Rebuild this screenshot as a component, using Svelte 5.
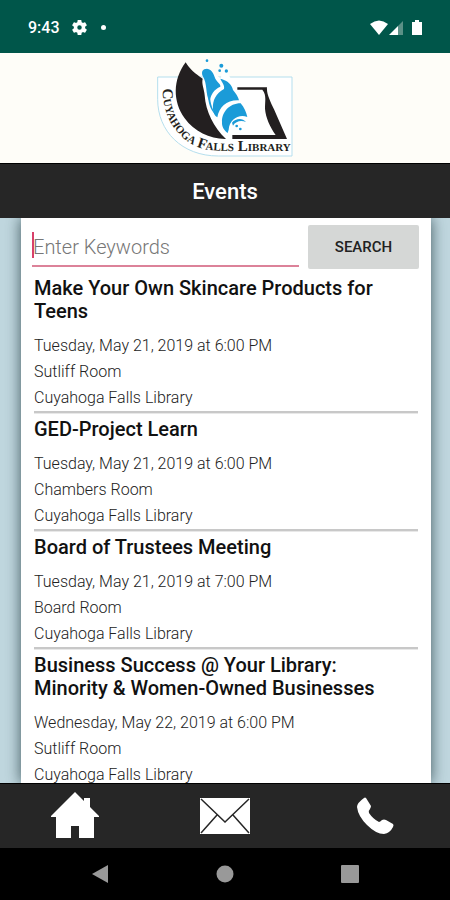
<script lang="ts">
  interface LibraryEvent {
    title: string;
    date: string;
    room: string;
  }

  const branch = 'Cuyahoga Falls Library';
  const events: LibraryEvent[] = [
    { title: 'Make Your Own Skincare Products for Teens', date: 'Tuesday, May 21, 2019 at 6:00 PM', room: 'Sutliff Room' },
    { title: 'GED-Project Learn', date: 'Tuesday, May 21, 2019 at 6:00 PM', room: 'Chambers Room' },
    { title: 'Board of Trustees Meeting', date: 'Tuesday, May 21, 2019 at 7:00 PM', room: 'Board Room' },
    {
      title: 'Business Success @ Your Library: Minority & Women-Owned Businesses',
      date: 'Wednesday, May 22, 2019 at 6:00 PM',
      room: 'Sutliff Room'
    }
  ];

  let keywords = $state('');
</script>

<div class="screen">
  <div class="status">
    <span class="time">9:43</span>
    <svg class="gear" width="15" height="15" viewBox="2 2 20 20" aria-hidden="true">
      <path
        fill="#fff"
        d="M19.43 12.98c.04-.32.07-.64.07-.98s-.03-.66-.07-.98l2.11-1.65c.19-.15.24-.42.12-.64l-2-3.46c-.12-.22-.39-.3-.61-.22l-2.49 1c-.52-.4-1.08-.73-1.69-.98l-.38-2.65A.49.49 0 0 0 14 2h-4c-.25 0-.46.18-.49.42l-.38 2.65c-.61.25-1.17.59-1.69.98l-2.49-1c-.23-.09-.49 0-.61.22l-2 3.46c-.13.22-.07.49.12.64l2.11 1.65c-.04.32-.07.65-.07.98s.03.66.07.98l-2.11 1.65c-.19.15-.24.42-.12.64l2 3.46c.12.22.39.3.61.22l2.49-1c.52.4 1.08.73 1.69.98l.38 2.65c.03.24.24.42.49.42h4c.25 0 .46-.18.49-.42l.38-2.65c.61-.25 1.17-.59 1.69-.98l2.49 1c.23.09.49 0 .61-.22l2-3.46c.12-.22.07-.49-.12-.64zM12 15a3 3 0 1 1 0-6 3 3 0 0 1 0 6z"
      />
    </svg>
    <span class="dot"></span>
    <svg class="signals" width="52" height="16" viewBox="0 0 52 16" aria-hidden="true">
      <path fill="#fff" d="M0 4Q9-3 18 4L9 15z" />
      <path fill="#fff" d="M19 15L28 6v9z" />
      <path fill="#5b9187" d="M28 6l5-5v14h-5z" />
      <path fill="#fff" d="M42 2h3V0h4v2h3V15H42z" />
    </svg>
  </div>

  <header class="brand">
    <svg width="140" height="104" viewBox="15 20 420 312" role="img" aria-label={branch}>
      <defs>
        <path id="arc" d="M38 118C38 165 50 205 72 235C92 265 125 290 165 300C195 304 220 305 250 305H430" />
      </defs>
      <path d="M23 83H426V320H205C95 320 23 245 23 150z" fill="#fff" stroke="#b5dfee" stroke-width="3" />
      <path
        d="M157 78L170 50L212 88L220 50L250 100L262 115L292 215L270 250L240 262L200 235L170 175z"
        fill="#fff"
      />
      <path
        d="M107 39C117 58 138 75 158 88C154 104 163 119 164 138C167 186 191 235 228 269C181 270 133 247 104 207C68 157 68 91 107 39z"
        fill="#231f20"
      />
      <path
        d="M262 114H351C349 134 362 158 372 180L411 269H247V257H377C360 232 347 205 345 178C345 151 350 138 337 121H262z"
        fill="#231f20"
      />
      <g fill="#1b9bd8">
        <path
          d="M158 80C153 67 158 58 171 58C187 61 190 72 196 88C202 99 213 104 211 112C193 119 180 138 179 158C165 133 173 102 158 80z"
        />
        <path
          d="M211 88C232 93 246 105 249 122C257 132 265 142 267 153C231 151 207 173 202 204C194 200 189 190 189 180C187 153 198 132 222 119C225 106 215 99 211 88z"
        />
        <path
          d="M272 162C283 174 289 190 292 203C266 193 238 211 236 241L233 251C222 243 215 232 216 218C215 190 237 162 272 162z"
        />
        <path d="M182 132C177 153 186 177 196 194C185 187 176 166 175 148z" />
        <path d="M246 220C257 207 277 205 288 218C274 212 257 215 249 229z" />
        <circle cx="260" cy="230" r="4" />
        <circle cx="271" cy="239" r="4" />
        <circle cx="171" cy="34" r="4" />
        <circle cx="214" cy="49" r="6" />
        <circle cx="209" cy="64" r="4" />
        <circle cx="229" cy="65" r="5" />
      </g>
      <text class="logo-text"><textPath href="#arc">{branch}</textPath></text>
    </svg>
  </header>

  <h1>Events</h1>

  <main>
    <div class="card">
      <form class="search" onsubmit={(e) => e.preventDefault()}>
        <div class="field">
          <span class="caret"></span>
          <input type="text" placeholder="Enter Keywords" aria-label="Enter Keywords" bind:value={keywords} />
        </div>
        <button type="submit">SEARCH</button>
      </form>

      <ul>
        {#each events as event}
          <li>
            <h2>{event.title}</h2>
            <p>{event.date}</p>
            <p>{event.room}</p>
            <p>{branch}</p>
          </li>
        {/each}
      </ul>
    </div>
  </main>

  <nav class="tabs">
    <a href="#home" aria-label="Home">
      <svg width="48" height="48" viewBox="0 0 48 48">
        <path d="M24 0L33 9V6h6v9l9 9v1h-5v21H28V34h-8v12H5V25H0v-1z" fill="#fff" />
      </svg>
    </a>
    <a href="#contact" aria-label="Email">
      <svg width="50" height="36" viewBox="0 0 50 36">
        <path d="M0 0h50v36H0z" fill="#fff" />
        <path d="M1 1L25 24L49 1M1 35L17 17M49 35L33 17" fill="none" stroke="#262626" stroke-width="1.500" />
      </svg>
    </a>
    <a href="#call" aria-label="Call">
      <svg width="38" height="38" viewBox="0 0 38 38">
        <path
          d="M8 1Q9 0 10 1L15 9Q15 10 14 12Q12 14 13 16Q17 22 23 25Q24 25 26 23Q28 22 30 23L37 27Q38 28 37 30Q34 36 28 37Q20 37 11 28Q2 19 1 10Q1 6 8 1z"
          fill="#fff"
        />
      </svg>
    </a>
  </nav>

  <div class="system">
    <button type="button" aria-label="Back">
      <svg width="18" height="18" viewBox="0 0 18 18"><path d="M17 0v18L1 9z" fill="#999" /></svg>
    </button>
    <button type="button" aria-label="Home screen">
      <svg width="18" height="18" viewBox="0 0 18 18"><circle cx="9" cy="9" r="8.500" fill="#999" /></svg>
    </button>
    <button type="button" aria-label="Recent apps">
      <svg width="18" height="18" viewBox="0 0 18 18"><rect width="18" height="18" rx="1" fill="#999" /></svg>
    </button>
  </div>
</div>

<style>
  :global(body) {
    margin: 0;
  }
  .screen {
    display: flex;
    flex-direction: column;
    height: 100vh;
    overflow: hidden;
    font-family: Roboto, sans-serif;
    color: #111;
  }
  .status {
    display: flex;
    align-items: center;
    flex: none;
    height: 53px;
    box-sizing: border-box;
    padding: 2px 28px 0;
    background: #00564a;
    color: #fff;
  }
  .time {
    font-size: 16px;
    font-weight: 500;
  }
  .gear {
    margin-left: 12px;
  }
  .dot {
    width: 5px;
    height: 5px;
    margin-left: 14px;
    border-radius: 50%;
    background: #fff;
  }
  .signals {
    margin-left: auto;
  }
  .brand {
    display: flex;
    justify-content: center;
    align-items: center;
    flex: none;
    height: 110px;
    background: #fefdf8;
  }
  .logo-text {
    font-family: 'Liberation Serif', serif;
    font-size: 45px;
    font-weight: 700;
    font-variant: small-caps;
    fill: #231f20;
  }
  h1 {
    flex: none;
    margin: 0;
    padding-top: 2px;
    border-top: 1px solid #000;
    background: #262626;
    color: #fff;
    font-size: 22px;
    font-weight: 500;
    line-height: 52px;
    text-align: center;
  }
  main {
    display: flex;
    flex: 1;
    min-height: 0;
    overflow: hidden;
    padding: 0 19px 0 21px;
    background: #c0d7df;
  }
  .card {
    flex: 1;
    min-width: 0;
    background: #fff;
    box-shadow: 0 0 14px rgba(30, 55, 60, 0.8);
  }
  .search {
    display: flex;
    gap: 9px;
    padding: 7px 12px 0 11px;
  }
  .field {
    display: flex;
    align-items: center;
    flex: 1;
    min-width: 0;
    height: 40px;
    border-bottom: 2px solid #dc8299;
  }
  .caret {
    width: 2px;
    height: 26px;
    margin-right: -2px;
    background: #d8416a;
  }
  input {
    flex: 1;
    min-width: 0;
    padding: 4px 0 0 1px;
    border: 0;
    outline: 0;
    background: none;
    color: #111;
    font: 300 20px Roboto, sans-serif;
  }
  input::placeholder {
    color: #777;
  }
  .search button {
    width: 111px;
    height: 44px;
    padding: 0;
    border: 0;
    border-radius: 2px;
    background: #d5d7d6;
    color: #222;
    font: 500 15px Roboto, sans-serif;
  }
  ul {
    margin: 8px 13px 0;
    padding: 0;
    list-style: none;
  }
  li {
    margin-bottom: 4px;
  }
  li::after {
    content: '';
    display: block;
    height: 2px;
    background: #c8c8c8;
    border-bottom: 1px solid #e8e8e8;
  }
  h2 {
    margin: 0 0 10px;
    padding-right: 16px;
    font-size: 20px;
    font-weight: 500;
    line-height: 23px;
  }
  p {
    margin: 0;
    color: #222;
    font-size: 16px;
    font-weight: 300;
    line-height: 26px;
  }
  .tabs {
    display: grid;
    grid-template-columns: repeat(3, 1fr);
    flex: none;
    height: 64px;
    border-top: 1px solid #000;
    background: #262626;
  }
  .tabs a {
    display: flex;
    justify-content: center;
    align-items: center;
  }
  .system {
    display: flex;
    justify-content: center;
    gap: 77px;
    flex: none;
    height: 52px;
    background: #000;
  }
  .system button {
    display: flex;
    justify-content: center;
    align-items: center;
    width: 48px;
    padding: 0;
    border: 0;
    background: none;
  }
</style>
